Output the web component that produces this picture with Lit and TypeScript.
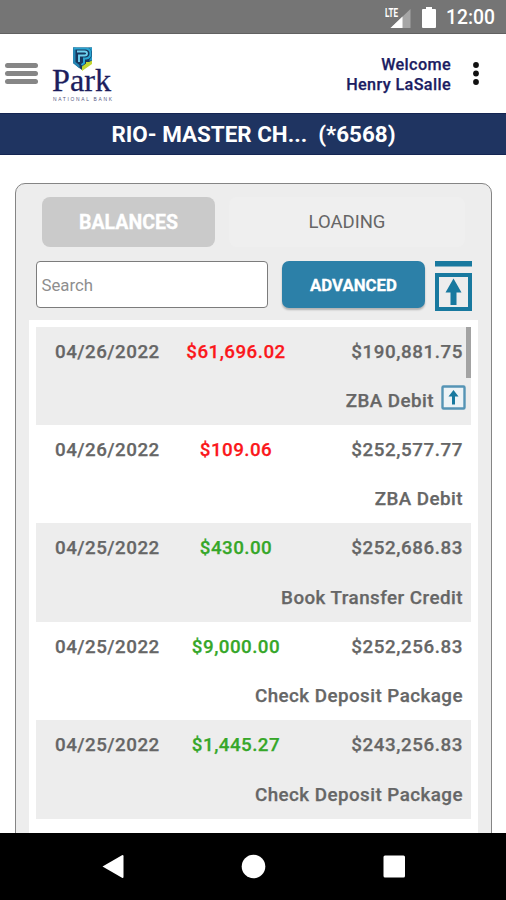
import { LitElement, html, css, svg } from "lit";
import { customElement } from "lit/decorators.js";
import { classMap } from "lit/directives/class-map.js";

interface Tx {
  date: string;
  amount: string;
  credit: boolean;
  balance: string;
  label: string;
  image?: boolean;
}

const transactions: Tx[] = [
  { date: "04/26/2022", amount: "$61,696.02", credit: false, balance: "$190,881.75", label: "ZBA Debit", image: true },
  { date: "04/26/2022", amount: "$109.06", credit: false, balance: "$252,577.77", label: "ZBA Debit" },
  { date: "04/25/2022", amount: "$430.00", credit: true, balance: "$252,686.83", label: "Book Transfer Credit" },
  { date: "04/25/2022", amount: "$9,000.00", credit: true, balance: "$252,256.83", label: "Check Deposit Package" },
  { date: "04/25/2022", amount: "$1,445.27", credit: true, balance: "$243,256.83", label: "Check Deposit Package" },
];

@customElement("app-root")
export class AppRoot extends LitElement {
  static styles = css`
    :host {
      display: flex;
      flex-direction: column;
      width: 506px;
      height: 900px;
      overflow: hidden;
      background: #fff;
      font-family: Roboto, sans-serif;
      color: #666;
    }
    * { box-sizing: border-box; }
    svg { display: block; flex: none; }
    .status {
      height: 34px;
      flex: none;
      background: #757575;
      border-bottom: 1px solid #616161;
      display: flex;
      align-items: center;
      justify-content: flex-end;
      padding-right: 11px;
      color: #fff;
    }
    .clock { width: 49px; margin-left: 9px; font-size: 19.3px; font-weight: 500; line-height: 34px; padding-top: 3px; white-space: nowrap; }
    .header {
      height: 79px;
      flex: none;
      display: flex;
      align-items: center;
      padding: 0 24px 0 5px;
    }
    .menu { display: flex; flex-direction: column; gap: 3px; width: 33px; }
    .bar { height: 5px; border-radius: 3px; background: #868686; }
    .brand { margin-left: 14px; width: 62px; height: 58px; margin-top: 3px; }
    .welcome {
      margin-left: auto;
      margin-right: 19px;
      text-align: right;
      font-size: 16.2px;
      letter-spacing: 0.38px;
      line-height: 20px;
      font-weight: 500;
      -webkit-text-stroke: 0.25px #1b1c62;
      color: #1b1c62;
      padding-top: 2px;
    }
    .account {
      height: 42px;
      flex: none;
      background: #1f3461;
      border-top: 1px solid #142552;
      border-bottom: 1px solid #142552;
      color: #fff;
      font-size: 22.4px;
      font-weight: 700;
      line-height: 41px;
      text-align: center;
      padding-left: 1px;
      white-space: pre;
    }
    .content { flex: 1; min-height: 0; overflow: hidden; padding: 28px 14px 0 15px; }
    .panel {
      height: 700px;
      border: 1px solid #858585;
      border-radius: 10px;
      background: #ededed;
      padding: 13px 13px 0;
    }
    .tabs { display: flex; margin: 0 13px; gap: 14px; }
    .tab { height: 50px; line-height: 51px; text-align: center; font-size: 19.5px; border-radius: 8px; }
    .tab.on { width: 173px; background: #cacaca; color: #fff; font-weight: 700; -webkit-text-stroke: 0.3px #fff; }
    .tab.off { flex: 1; background: #efefef; color: #666; font-size: 18.5px; }
    .tools { display: flex; margin: 14px 6px 0 7px; height: 50px; }
    .search {
      width: 232px;
      height: 47px;
      border: 1px solid #7c7c7c;
      border-radius: 4px;
      background: #fff;
      padding-left: 4.5px;
      line-height: 46px;
      font-size: 16.8px;
      color: #8e8e8e;
    }
    .advanced {
      width: 143px;
      height: 47px;
      margin: 0 10px 0 14px;
      border-radius: 7px;
      background: #2c80a8;
      box-shadow: 0 2px 2px rgba(0, 0, 0, 0.25);
      color: #fff;
      text-align: center;
      font-size: 16.8px;
      font-weight: 700;
      -webkit-text-stroke: 0.3px #fff;
      line-height: 49px;
    }
    .list { margin-top: 9px; height: 600px; background: #fff; padding: 6.6px 7px 0; position: relative; }
    .thumb { position: absolute; right: 7px; top: 7px; width: 5px; height: 51px; background: #a3a3a3; }
    .row { height: 98.4px; padding: 0 8px 0 19px; font-size: 18.8px; font-weight: 500; letter-spacing: 0.46px; -webkit-text-stroke: 0.25px currentColor; }
    .row.alt { background: #ededed; }
    .line { display: grid; grid-template-columns: 105px 152px 1fr; height: 49px; line-height: 51px; }
    .date { white-space: nowrap; }
    .amount { text-align: center; color: #fb171b; }
    .amount.credit { color: #36a729; }
    .balance { text-align: right; letter-spacing: 0.56px; }
    .desc { display: flex; justify-content: flex-end; align-items: center; gap: 7px; height: 49px; line-height: 52px; padding-top: 2px; }
    .desc svg { margin: -7px -3px 0 0; }
    .nav { height: 67px; flex: none; background: #000; }
  `;

  private logo() {
    return svg`<svg class="brand" viewBox="0 0 62 58">
      <path d="M21 1.5h19V16l-10 8-9-7z" fill="#17375f"/>
      <path d="M21 1.500h2.500V16l4 3v3.500L21 17z" fill="#2487b5"/>
      <path d="M40 14.500V18l-10 7v-4.500l4-3V16h3z" fill="#c3d62f"/>
      <path d="M22 2.500h12q4.500 .5 4.500 5T34 12.500h-2V17l-2.500 2" fill="none" stroke="#2aa5d2" stroke-width="2"/>
      <path d="M25 5.500h7.500q2.500 0 2.500 2t-2.500 2H27V16" fill="none" stroke="#6ed0ee" stroke-width="1.900"/>
      <path d="M40 1.500v13l-3 0q3-3 3-7t-4-6z" fill="#249bc8"/>
      <text x="0" y="44.500" font-family="Liberation Serif, serif" font-size="31.500" textLength="59" lengthAdjust="spacingAndGlyphs" fill="#1c1d5d" stroke="#1c1d5d" stroke-width="0.300">Park</text>
      <text x="1" y="54.800" font-family="Liberation Sans, sans-serif" font-size="4.900" textLength="59" lengthAdjust="spacing" fill="#53567f">NATIONAL BANK</text>
    </svg>`;
  }

  render() {
    return html`
      <div class="status">
        <svg width="28" height="22" viewBox="0 0 28 22">
          <path d="M25.500 3v19H5.500z" fill="#a6a6a6"/><path d="M17.500 10.500V22H5.500z" fill="#fff"/>
          <text x="0" y="11" font-family="Roboto, sans-serif" font-size="12" font-weight="700" textLength="13" lengthAdjust="spacingAndGlyphs" fill="#fff">LTE</text>
        </svg>
        <svg width="24" height="22" viewBox="0 0 24 22"><path d="M13 1h6v2h3q1 0 1 1v17q0 1-1 1H10q-1 0-1-1V4q0-1 1-1h3z" fill="#fff"/></svg>
        <div class="clock">12:00</div>
      </div>
      <div class="header">
        <div class="menu"><div class="bar"></div><div class="bar"></div><div class="bar"></div></div>
        ${this.logo()}
        <div class="welcome">Welcome<br>Henry LaSalle</div>
        <svg width="12" height="26" viewBox="0 0 12 26"><g fill="#111"><circle cx="6" cy="4" r="2.900"/><circle cx="6" cy="12.500" r="2.900"/><circle cx="6" cy="21" r="2.900"/></g></svg>
      </div>
      <div class="account">RIO- MASTER CH...  (*6568)</div>
      <div class="content">
        <div class="panel">
          <div class="tabs"><div class="tab on">BALANCES</div><div class="tab off">LOADING</div></div>
          <div class="tools">
            <div class="search">Search</div>
            <div class="advanced">ADVANCED</div>
            <svg width="37" height="50" viewBox="0 0 37 50"><path d="M0 0h37v5.500H0z" fill="#18799f"/><path d="M2 14h33v34H2z" fill="none" stroke="#18799f" stroke-width="4"/><path d="M18.500 17.500l8 14h-5V44h-6V31.500h-5z" fill="#18799f"/></svg>
          </div>
          <div class="list">
            ${transactions.map((t, i) => html`
              <div class=${classMap({ row: true, alt: i % 2 === 0 })}>
                <div class="line">
                  <span class="date">${t.date}</span>
                  <span class=${classMap({ amount: true, credit: t.credit })}>${t.amount}</span>
                  <span class="balance">${t.balance}</span>
                </div>
                <div class="desc"><span>${t.label}</span>${t.image ? html`<svg width="25" height="25" viewBox="0 0 25 25"><rect x="1.500" y="1.500" width="22" height="22" rx="1" fill="#edf3f6" stroke="#5594b5" stroke-width="2.400"/><path d="M12.500 5l5 6.500h-3.500V19.500h-3v-8H7.500z" fill="#18799f"/></svg>` : ""}</div>
              </div>`)}
            <div class="thumb"></div>
          </div>
        </div>
      </div>
      <div class="nav">
        <svg width="506" height="67" viewBox="0 0 506 67" fill="#fff"><path d="M102.500 33.500L122 22.200q1.500-.8 1.500 1v20.600q0 1.800-1.500 1z"/><circle cx="253.500" cy="33.500" r="11.800"/><rect x="383.500" y="22.500" width="21.500" height="22" rx="1.500"/></svg>
      </div>
    `;
  }
}
